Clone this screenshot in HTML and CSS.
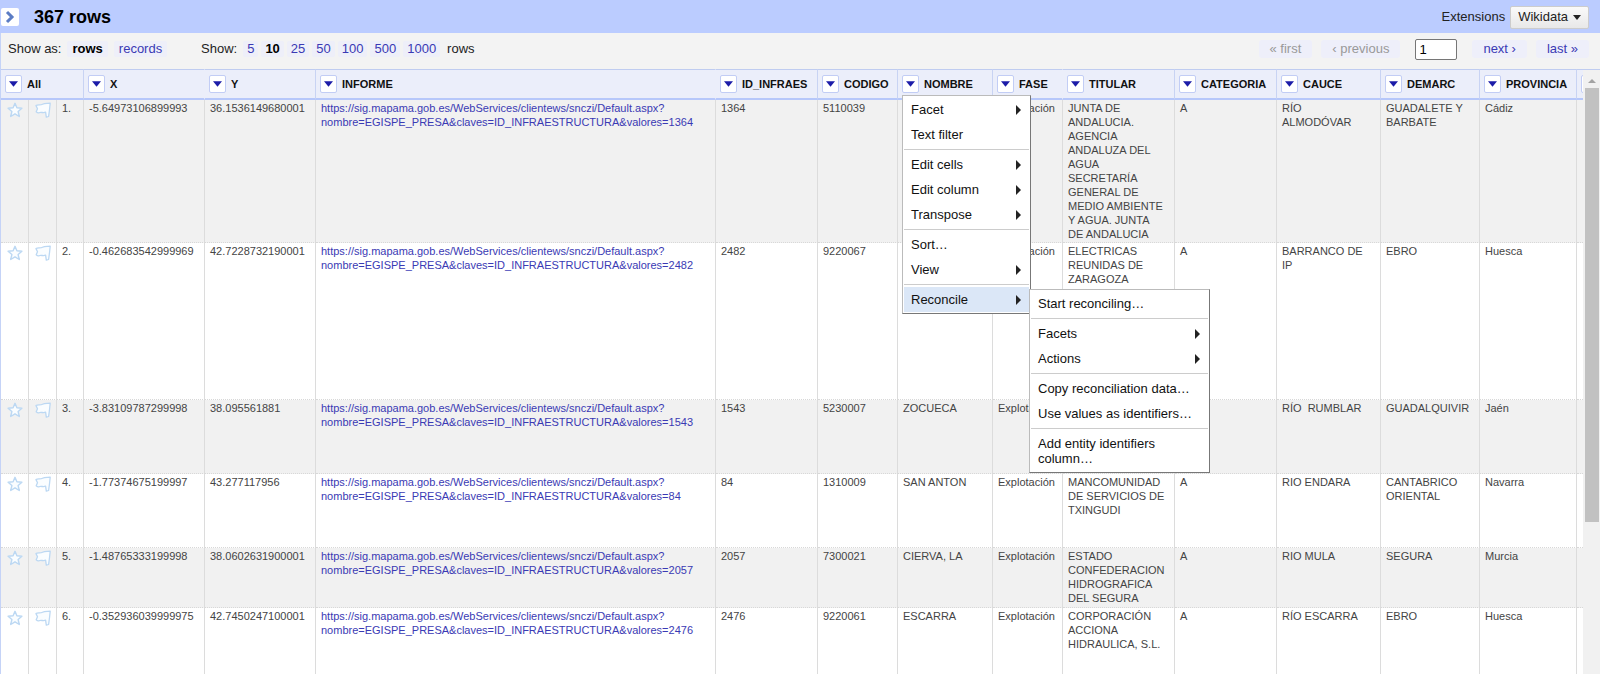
FILE: index.html
```html
<!DOCTYPE html>
<html lang="en">
<head>
<meta charset="utf-8">
<title>367 rows</title>
<link rel="stylesheet" href="styles.css">
</head>
<body>
<svg class="defs" aria-hidden="true">
  <symbol id="star" viewBox="0 0 16 16"><path d="M8 1.300l1.900 4.500 5 .4-3.800 3.300 1.200 5L8 11.800l-4.300 2.700 1.200-5L1.100 6.200l5-.4z" fill="#fafdff" stroke="#bcd8f3" stroke-width="1.4" stroke-linejoin="round"/></symbol>
  <symbol id="flag" viewBox="0 0 16 16"><path d="M1 3.600C3 2 5 3.600 7.500 2.200 10 .8 12.500 1.600 15.200 1.200L14.600 7 13.600 14.500 11.300 15.200 10.600 10.200C8 11.400 6 9.600 4 10.800 3 11 2 10.600 1.200 9.800L2.500 6.800z" fill="#fafdff" stroke="#bcd8f3" stroke-width="1.300" stroke-linejoin="round"/></symbol>
  <symbol id="down" viewBox="0 0 10 6"><path d="M0 0h10L5 6z" fill="#1c1ca8"/></symbol>
</svg>
<main class="app">
  <header class="summary">
    <button class="expand" aria-label="Open panel"><svg viewBox="0 0 18 18"><path d="M6 4l5 5-5 5" fill="none" stroke="#5b7cc4" stroke-width="3"/></svg></button>
    <h1>367 rows</h1>
    <div class="extensions"><span>Extensions</span><button class="ext-button">Wikidata <svg viewBox="0 0 8 5"><path d="M0 0h8L4 5z" fill="#222"/></svg></button></div>
  </header>
  <div class="controls">
    <div class="modes"><span>Show as:</span><span class="chip on">rows</span><a class="chip" href="#">records</a></div>
    <div class="sizes"><span>Show:</span><a class="chip" href="#">5</a><span class="chip on">10</span><a class="chip" href="#">25</a><a class="chip" href="#">50</a><a class="chip" href="#">100</a><a class="chip" href="#">500</a><a class="chip" href="#">1000</a><span class="unit">rows</span></div>
    <nav class="pager"><span class="page off">« first</span><span class="page off">‹ previous</span><input type="text" value="1" aria-label="Page"><a class="page" href="#">next ›</a><a class="page" href="#">last »</a></nav>
  </div>
  <div class="grid">
    <div class="viewport">
      <table>
        <colgroup><col class="c-icon"><col class="c-icon"><col class="c-index"><col class="c-x"><col class="c-y"><col class="c-link"><col class="c-id"><col class="c-code"><col class="c-name"><col class="c-phase"><col class="c-owner"><col class="c-cat"><col class="c-river"><col class="c-basin"><col class="c-prov"><col></colgroup>
        <thead><tr>
          <th colspan="3"><div class="head"><button aria-label="All menu"><svg><use href="#down"/></svg></button>All</div></th>
          <th class="open"><div class="head"><button aria-label="X menu"><svg><use href="#down"/></svg></button>X</div></th>
          <th><div class="head"><button aria-label="Y menu"><svg><use href="#down"/></svg></button>Y</div></th>
          <th class="open"><div class="head"><button aria-label="INFORME menu"><svg><use href="#down"/></svg></button>INFORME</div></th>
          <th><div class="head"><button aria-label="ID_INFRAES menu"><svg><use href="#down"/></svg></button>ID_INFRAES</div></th>
          <th><div class="head"><button aria-label="CODIGO menu"><svg><use href="#down"/></svg></button>CODIGO</div></th>
          <th><div class="head"><button aria-label="NOMBRE menu"><svg><use href="#down"/></svg></button>NOMBRE
            <div class="menu" role="menu">
              <button class="item more">Facet</button>
              <button class="item">Text filter</button>
              <hr>
              <button class="item more">Edit cells</button>
              <button class="item more">Edit column</button>
              <button class="item more">Transpose</button>
              <hr>
              <button class="item">Sort…</button>
              <button class="item more">View</button>
              <hr>
              <div class="branch">
                <button class="item more active">Reconcile</button>
                <div class="menu submenu" role="menu">
                  <button class="item">Start reconciling…</button>
                  <hr>
                  <button class="item more">Facets</button>
                  <button class="item more">Actions</button>
                  <hr>
                  <button class="item">Copy reconciliation data…</button>
                  <button class="item">Use values as identifiers…</button>
                  <hr>
                  <button class="item">Add entity identifiers column…</button>
                </div>
              </div>
            </div>
          </div></th>
          <th class="open"><div class="head"><button aria-label="FASE menu"><svg><use href="#down"/></svg></button>FASE</div></th>
          <th><div class="head"><button aria-label="TITULAR menu"><svg><use href="#down"/></svg></button>TITULAR</div></th>
          <th><div class="head"><button aria-label="CATEGORIA menu"><svg><use href="#down"/></svg></button>CATEGORIA</div></th>
          <th><div class="head"><button aria-label="CAUCE menu"><svg><use href="#down"/></svg></button>CAUCE</div></th>
          <th><div class="head"><button aria-label="DEMARC menu"><svg><use href="#down"/></svg></button>DEMARC</div></th>
          <th><div class="head"><button aria-label="PROVINCIA menu"><svg><use href="#down"/></svg></button>PROVINCIA</div></th>
          <th class="last"><div class="head"><button aria-label="Next column menu"></button></div></th>
        </tr></thead>
        <tbody>
          <tr class="r-xl"><td><svg class="mark"><use href="#star"/></svg></td><td><svg class="mark"><use href="#flag"/></svg></td><td>1.</td><td>-5.64973106899993</td><td>36.1536149680001</td><td><a href="#">https://sig.mapama.gob.es/WebServices/clientews/snczi/Default.aspx?<br>nombre=EGISPE_PRESA&amp;claves=ID_INFRAESTRUCTURA&amp;valores=1364</a></td><td>1364</td><td>5110039</td><td></td><td>Explotación</td><td>JUNTA DE<br>ANDALUCIA.<br>AGENCIA<br>ANDALUZA DEL<br>AGUA<br>SECRETARÍA<br>GENERAL DE<br>MEDIO AMBIENTE<br>Y AGUA. JUNTA<br>DE ANDALUCIA</td><td>A</td><td>RÍO<br>ALMODÓVAR</td><td>GUADALETE Y<br>BARBATE</td><td>Cádiz</td><td class="last"></td></tr>
          <tr class="r-xxl"><td><svg class="mark"><use href="#star"/></svg></td><td><svg class="mark"><use href="#flag"/></svg></td><td>2.</td><td>-0.462683542999969</td><td>42.7228732190001</td><td><a href="#">https://sig.mapama.gob.es/WebServices/clientews/snczi/Default.aspx?<br>nombre=EGISPE_PRESA&amp;claves=ID_INFRAESTRUCTURA&amp;valores=2482</a></td><td>2482</td><td>9220067</td><td></td><td>Explotación</td><td>ELECTRICAS<br>REUNIDAS DE<br>ZARAGOZA</td><td>A</td><td>BARRANCO DE<br>IP</td><td>EBRO</td><td>Huesca</td><td class="last"></td></tr>
          <tr class="r-m"><td><svg class="mark"><use href="#star"/></svg></td><td><svg class="mark"><use href="#flag"/></svg></td><td>3.</td><td>-3.83109787299998</td><td>38.095561881</td><td><a href="#">https://sig.mapama.gob.es/WebServices/clientews/snczi/Default.aspx?<br>nombre=EGISPE_PRESA&amp;claves=ID_INFRAESTRUCTURA&amp;valores=1543</a></td><td>1543</td><td>5230007</td><td>ZOCUECA</td><td>Explotación</td><td></td><td></td><td>RÍO&nbsp; RUMBLAR</td><td>GUADALQUIVIR</td><td>Jaén</td><td class="last"></td></tr>
          <tr class="r-m"><td><svg class="mark"><use href="#star"/></svg></td><td><svg class="mark"><use href="#flag"/></svg></td><td>4.</td><td>-1.77374675199997</td><td>43.277117956</td><td><a href="#">https://sig.mapama.gob.es/WebServices/clientews/snczi/Default.aspx?<br>nombre=EGISPE_PRESA&amp;claves=ID_INFRAESTRUCTURA&amp;valores=84</a></td><td>84</td><td>1310009</td><td>SAN ANTON</td><td>Explotación</td><td>MANCOMUNIDAD<br>DE SERVICIOS DE<br>TXINGUDI</td><td>A</td><td>RIO ENDARA</td><td>CANTABRICO<br>ORIENTAL</td><td>Navarra</td><td class="last"></td></tr>
          <tr class="r-s"><td><svg class="mark"><use href="#star"/></svg></td><td><svg class="mark"><use href="#flag"/></svg></td><td>5.</td><td>-1.48765333199998</td><td>38.0602631900001</td><td><a href="#">https://sig.mapama.gob.es/WebServices/clientews/snczi/Default.aspx?<br>nombre=EGISPE_PRESA&amp;claves=ID_INFRAESTRUCTURA&amp;valores=2057</a></td><td>2057</td><td>7300021</td><td>CIERVA, LA</td><td>Explotación</td><td>ESTADO<br>CONFEDERACION<br>HIDROGRAFICA<br>DEL SEGURA</td><td>A</td><td>RIO MULA</td><td>SEGURA</td><td>Murcia</td><td class="last"></td></tr>
          <tr class="r-m"><td><svg class="mark"><use href="#star"/></svg></td><td><svg class="mark"><use href="#flag"/></svg></td><td>6.</td><td>-0.352936039999975</td><td>42.7450247100001</td><td><a href="#">https://sig.mapama.gob.es/WebServices/clientews/snczi/Default.aspx?<br>nombre=EGISPE_PRESA&amp;claves=ID_INFRAESTRUCTURA&amp;valores=2476</a></td><td>2476</td><td>9220061</td><td>ESCARRA</td><td>Explotación</td><td>CORPORACIÓN<br>ACCIONA<br>HIDRAULICA, S.L.</td><td>A</td><td>RÍO ESCARRA</td><td>EBRO</td><td>Huesca</td><td class="last"></td></tr>
        </tbody>
      </table>
    </div>
    <div class="scrollbar" aria-hidden="true"><svg viewBox="0 0 8 4"><path d="M0 4h8L4 0z" fill="#a3a3a3"/></svg><div class="thumb"></div></div>
  </div>
</main>
</body>
</html>
```
FILE: styles.css
```css
* { box-sizing: border-box; }
body { margin: 0; font: 13px/16px "Liberation Sans", Arial, sans-serif; color: #222; background: #fff; }
button, input { font: inherit; color: inherit; }
a { color: #3a3ab4; text-decoration: none; }
.defs { position: absolute; width: 0; height: 0; }
.app { display: flex; flex-direction: column; height: 100vh; overflow: hidden; }

.summary { display: flex; align-items: center; height: 33px; flex: none; padding: 1px 11px 0 1px; background: #bbccff; }
.expand { width: 18px; height: 18px; padding: 0; border: 0; border-radius: 2px; background: #fff; }
.expand svg { display: block; width: 18px; height: 18px; }
h1 { margin: 0 0 0 15px; font-size: 18px; line-height: 22px; color: #000; }
.extensions { display: flex; align-items: center; gap: 5px; margin-left: auto; }
.ext-button { display: flex; align-items: center; gap: 5px; height: 23px; padding: 0 7px; border: 1px solid #ccc; border-radius: 2px; background: linear-gradient(#fafafa, #e8e8e8); }
.ext-button svg { width: 8px; height: 5px; }

.controls { display: flex; align-items: center; height: 36px; flex: none; padding: 0 11px 4px 7px; border-left: 1px solid #c5d3f7; background: #f3f3f3; }
.modes, .sizes { display: flex; align-items: center; }
.modes { gap: 6px; width: 193px; }
.chip { padding: 0 4px; border-radius: 2px; background: #eeeff9; }
.modes .chip { padding: 0 5px; }
.chip.on { font-weight: bold; color: #000; }
.sizes { gap: 3px; }
.sizes span:first-child { padding-right: 3px; }
.unit { padding-left: 4px; }
.pager { display: flex; align-items: center; gap: 9px; margin-left: auto; }
.page { padding: 1px 11px; border-radius: 3px; background: #eeeffa; }
.page.off { color: #999; }
.pager input { width: 42px; height: 21px; margin: 0 6px; padding: 0 3px; border: 1px solid #767676; border-radius: 2px; background: #fff; color: #000; }

.grid { display: flex; flex: 1; min-height: 0; }
.viewport { flex: 1; min-width: 0; overflow: hidden; border-left: 1px solid #c5d3f7; }
table { width: 100%; table-layout: fixed; border-collapse: separate; border-spacing: 0; font-size: 11px; line-height: 14px; }
.c-icon { width: 28px; }
.c-index { width: 27px; }
.c-x { width: 121px; }
.c-y { width: 111px; }
.c-link { width: 400px; }
.c-id { width: 102px; }
.c-code { width: 80px; }
.c-name { width: 95px; }
.c-phase { width: 70px; }
.c-owner { width: 112px; }
.c-cat { width: 102px; }
.c-river { width: 104px; }
.c-basin { width: 99px; }
.c-prov { width: 97px; }
th { height: 31px; padding: 0 0 0 4px; border-top: 1px solid #bfccf0; border-bottom: 2px solid #b6c7fa; border-right: 1px solid #c8d3f3; background: #ebeefa; text-align: left; white-space: nowrap; color: #111; }
th.open { border-right-color: #ebeefa; }
.head { position: relative; display: flex; align-items: center; gap: 5px; }
.head > button { display: flex; align-items: center; justify-content: center; flex: none; width: 17px; height: 18px; padding: 0; border: 1px solid #c2cdf5; border-radius: 2px; background: #fff; }
.head > button svg { width: 9px; height: 6px; }
td { padding: 1px 0 1px 5px; border-right: 1px solid #dcdcdc; border-bottom: 1px dotted #d8d8d8; vertical-align: top; white-space: nowrap; color: #444; }
.last { overflow: hidden; border-right: 0; }
tbody tr:nth-child(odd) { background: #f1f1f1; }
.mark { display: block; width: 16px; height: 16px; margin: 1px 0 0 1px; }
.r-s { height: 60px; }
.r-m { height: 74px; }
.r-xl { height: 143px; }
.r-xxl { height: 157px; }

.menu { position: absolute; z-index: 2; top: 100%; left: 0; width: 129px; margin-top: 2px; padding: 1px; border: 1px solid #bbb; border-right-color: #777; border-bottom-color: #777; background: #fff; font-size: 13px; font-weight: normal; line-height: 15px; }
.item { position: relative; display: block; width: 100%; padding: 5px 7px; border: 0; background: none; text-align: left; color: #111; }
.more::after { content: ""; position: absolute; top: 8px; right: 8px; border-left: 5px solid #222; border-top: 5px solid transparent; border-bottom: 5px solid transparent; }
.active { background: #dbe7f7; }
.menu hr { height: 1px; margin: 2px 0; border: 0; background: #ccc; }
.branch { position: relative; }
.menu .submenu { top: 0; left: 100%; width: 181px; white-space: normal; }

.scrollbar { display: flex; flex-direction: column; align-items: center; gap: 5px; flex: none; width: 17px; padding: 9px 1px 0; border-top: 1px solid #bfccf0; background: #f1f1f1; }
.scrollbar svg { flex: none; width: 8px; height: 4px; }
.thumb { width: 14px; height: 73%; background: #c1c1c1; }
```
